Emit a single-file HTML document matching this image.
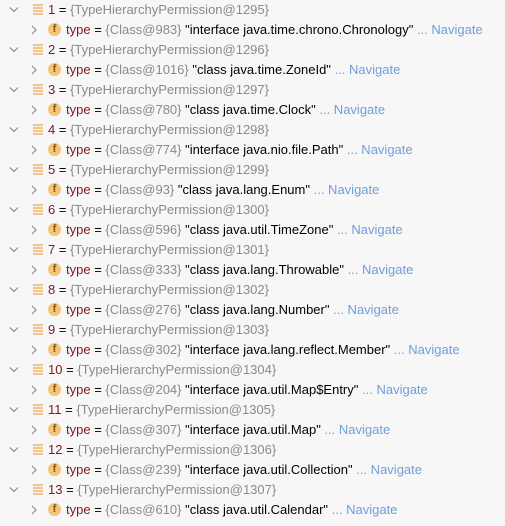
<!DOCTYPE html>
<html><head><meta charset="utf-8"><style>
body{margin:0;width:505px;height:519px;background:#f7f7f7;overflow:hidden;font-family:"Liberation Sans",sans-serif;font-size:13px;}
.r{position:absolute;left:0;height:20px;line-height:20px;white-space:nowrap;}
.ch{position:absolute;top:0;width:12px;height:20px;}
.eq{position:absolute;left:33px;top:4px;width:10px;height:11px;background:repeating-linear-gradient(#f4c486 0 2px,transparent 2px 3px);}
.f{position:absolute;left:48px;top:3px;width:13px;height:13px;border-radius:50%;background:#f4c67a;color:#8a5a10;font-family:"Liberation Sans",sans-serif;font-size:11px;font-weight:bold;line-height:13px;text-align:center;}
.t{position:absolute;top:0;}
.n{color:#7d1a1a}.g{color:#8a8a8a}.k{color:#000}.nv{color:#6f9fd8}
</style></head><body>
<script>
const d=[["983","interface java.time.chrono.Chronology"],["1016","class java.time.ZoneId"],["780","class java.time.Clock"],["774","interface java.nio.file.Path"],["93","class java.lang.Enum"],["596","class java.util.TimeZone"],["333","class java.lang.Throwable"],["276","class java.lang.Number"],["302","interface java.lang.reflect.Member"],["204","interface java.util.Map$Entry"],["307","interface java.util.Map"],["239","interface java.util.Collection"],["610","class java.util.Calendar"]];
const down='<svg width="12" height="20"><path d="M2 7.5 L6 11.5 L10 7.5" fill="none" stroke="#888" stroke-width="1.1"/></svg>';
const right='<svg width="12" height="20"><path d="M4 6 L8 10 L4 14" fill="none" stroke="#888" stroke-width="1.1"/></svg>';
let h='';
d.forEach((e,i)=>{
 const y=i*40;
 h+=`<div class="r" style="top:${y}px"><div class="ch" style="left:8px">${down}</div><div class="eq"></div><div class="t" style="left:48px"><span class="n">${i+1}</span> <span class="k">=</span> <span class="g">{TypeHierarchyPermission@${1295+i}}</span></div></div>`;
 h+=`<div class="r" style="top:${y+20}px"><div class="ch" style="left:28px">${right}</div><div class="f">f</div><div class="t" style="left:66px"><span class="n">type</span> <span class="k">=</span> <span class="g">{Class@${e[0]}}</span> <span class="k">"${e[1]}"</span> <span class="nv">... Navigate</span></div></div>`;
});
document.write(h);
document.querySelectorAll('.r').forEach(r=>{const t=r.querySelector('.t');const w=t.offsetLeft+t.offsetWidth;if(w>500){t.style.fontSize=(13*(500-t.offsetLeft)/t.offsetWidth)+'px';}});
</script>
</body></html>
